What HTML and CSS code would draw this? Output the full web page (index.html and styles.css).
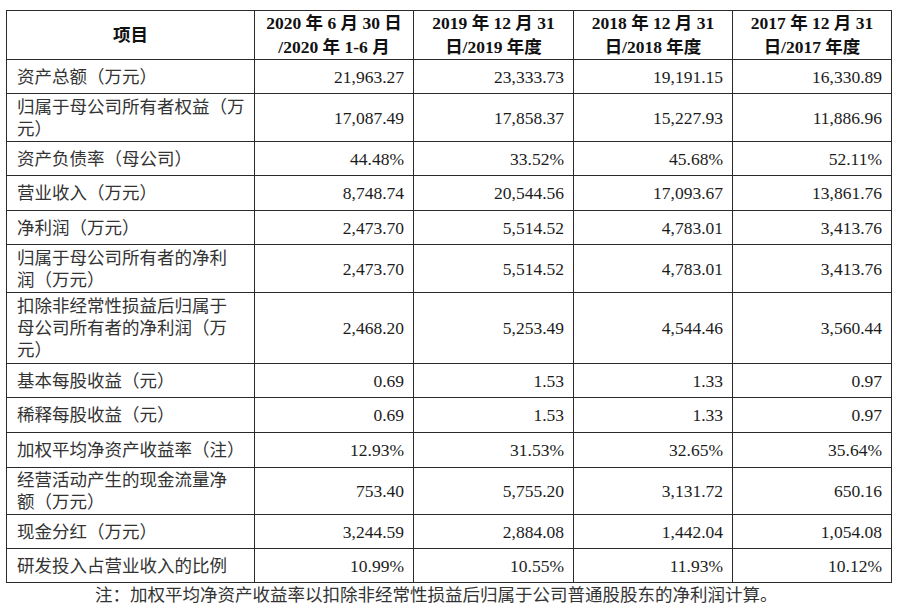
FILE: index.html
```html
<!DOCTYPE html>
<html lang="zh-CN">
<head>
<meta charset="utf-8">
<title>主要财务数据</title>
<link rel="stylesheet" href="styles.css">
</head>
<body>
<div class="page">
<table class="fin">
  <colgroup>
    <col class="c-item"><col class="c-num"><col class="c-num2"><col class="c-num"><col class="c-num">
  </colgroup>
  <thead>
    <tr class="r48">
      <th>项目</th>
      <th>2020 年 6 月 30 日<br>/2020 年 1-6 月</th>
      <th>2019 年 12 月 31<br>日/2019 年度</th>
      <th>2018 年 12 月 31<br>日/2018 年度</th>
      <th>2017 年 12 月 31<br>日/2017 年度</th>
    </tr>
  </thead>
  <tbody>
    <tr class="r34"><td class="lbl">资产总额（万元）</td><td>21,963.27</td><td>23,333.73</td><td>19,191.15</td><td>16,330.89</td></tr>
    <tr class="r48"><td class="lbl">归属于母公司所有者权益（万<br>元）</td><td>17,087.49</td><td>17,858.37</td><td>15,227.93</td><td>11,886.96</td></tr>
    <tr class="r34"><td class="lbl">资产负债率（母公司）</td><td>44.48%</td><td>33.52%</td><td>45.68%</td><td>52.11%</td></tr>
    <tr class="r35"><td class="lbl">营业收入（万元）</td><td>8,748.74</td><td>20,544.56</td><td>17,093.67</td><td>13,861.76</td></tr>
    <tr class="r34"><td class="lbl">净利润（万元）</td><td>2,473.70</td><td>5,514.52</td><td>4,783.01</td><td>3,413.76</td></tr>
    <tr class="r48"><td class="lbl">归属于母公司所有者的净利<br>润（万元）</td><td>2,473.70</td><td>5,514.52</td><td>4,783.01</td><td>3,413.76</td></tr>
    <tr class="r71"><td class="lbl">扣除非经常性损益后归属于<br>母公司所有者的净利润（万<br>元）</td><td>2,468.20</td><td>5,253.49</td><td>4,544.46</td><td>3,560.44</td></tr>
    <tr class="r34"><td class="lbl">基本每股收益（元）</td><td>0.69</td><td>1.53</td><td>1.33</td><td>0.97</td></tr>
    <tr class="r35"><td class="lbl">稀释每股收益（元）</td><td>0.69</td><td>1.53</td><td>1.33</td><td>0.97</td></tr>
    <tr class="r35"><td class="lbl">加权平均净资产收益率（注）</td><td>12.93%</td><td>31.53%</td><td>32.65%</td><td>35.64%</td></tr>
    <tr class="r47"><td class="lbl">经营活动产生的现金流量净<br>额（万元）</td><td>753.40</td><td>5,755.20</td><td>3,131.72</td><td>650.16</td></tr>
    <tr class="r34"><td class="lbl">现金分红（万元）</td><td>3,244.59</td><td>2,884.08</td><td>1,442.04</td><td>1,054.08</td></tr>
    <tr class="r34"><td class="lbl">研发投入占营业收入的比例</td><td>10.99%</td><td>10.55%</td><td>11.93%</td><td>10.12%</td></tr>
  </tbody>
</table>
<p class="note">注：加权平均净资产收益率以扣除非经常性损益后归属于公司普通股股东的净利润计算。</p>
</div>
</body>
</html>
```
FILE: styles.css
```css
html, body {
  margin: 0;
  padding: 0;
  background: #ffffff;
}

.page {
  padding: 10px 0 0 6px;
  font-family: "Liberation Serif", "Noto Sans CJK SC", serif;
  font-size: 17.5px;
  color: #1c1c1c;
}

.fin {
  border-collapse: collapse;
  table-layout: fixed;
  width: 885px;
}

.c-item { width: 248px; }
.c-num { width: 159px; }
.c-num2 { width: 160px; }

.fin th,
.fin td {
  border: 1px solid #2a2a2a;
  padding: 0 9px 0 10px;
  vertical-align: middle;
  white-space: nowrap;
  overflow: hidden;
}

.fin th {
  font-weight: bold;
  text-align: center;
  line-height: 24px;
  color: #111;
  padding: 0;
}

.fin td {
  text-align: right;
  line-height: 22px;
}

.fin td.lbl {
  text-align: left;
  color: #333;
}

.r34 { height: 34px; }
.r35 { height: 35px; }
.r47 { height: 47px; }
.r48 { height: 48px; }
.r71 { height: 71px; }

.note {
  margin: 0;
  padding: 1px 0 0 89px;
  line-height: 22px;
  color: #333;
}
```
